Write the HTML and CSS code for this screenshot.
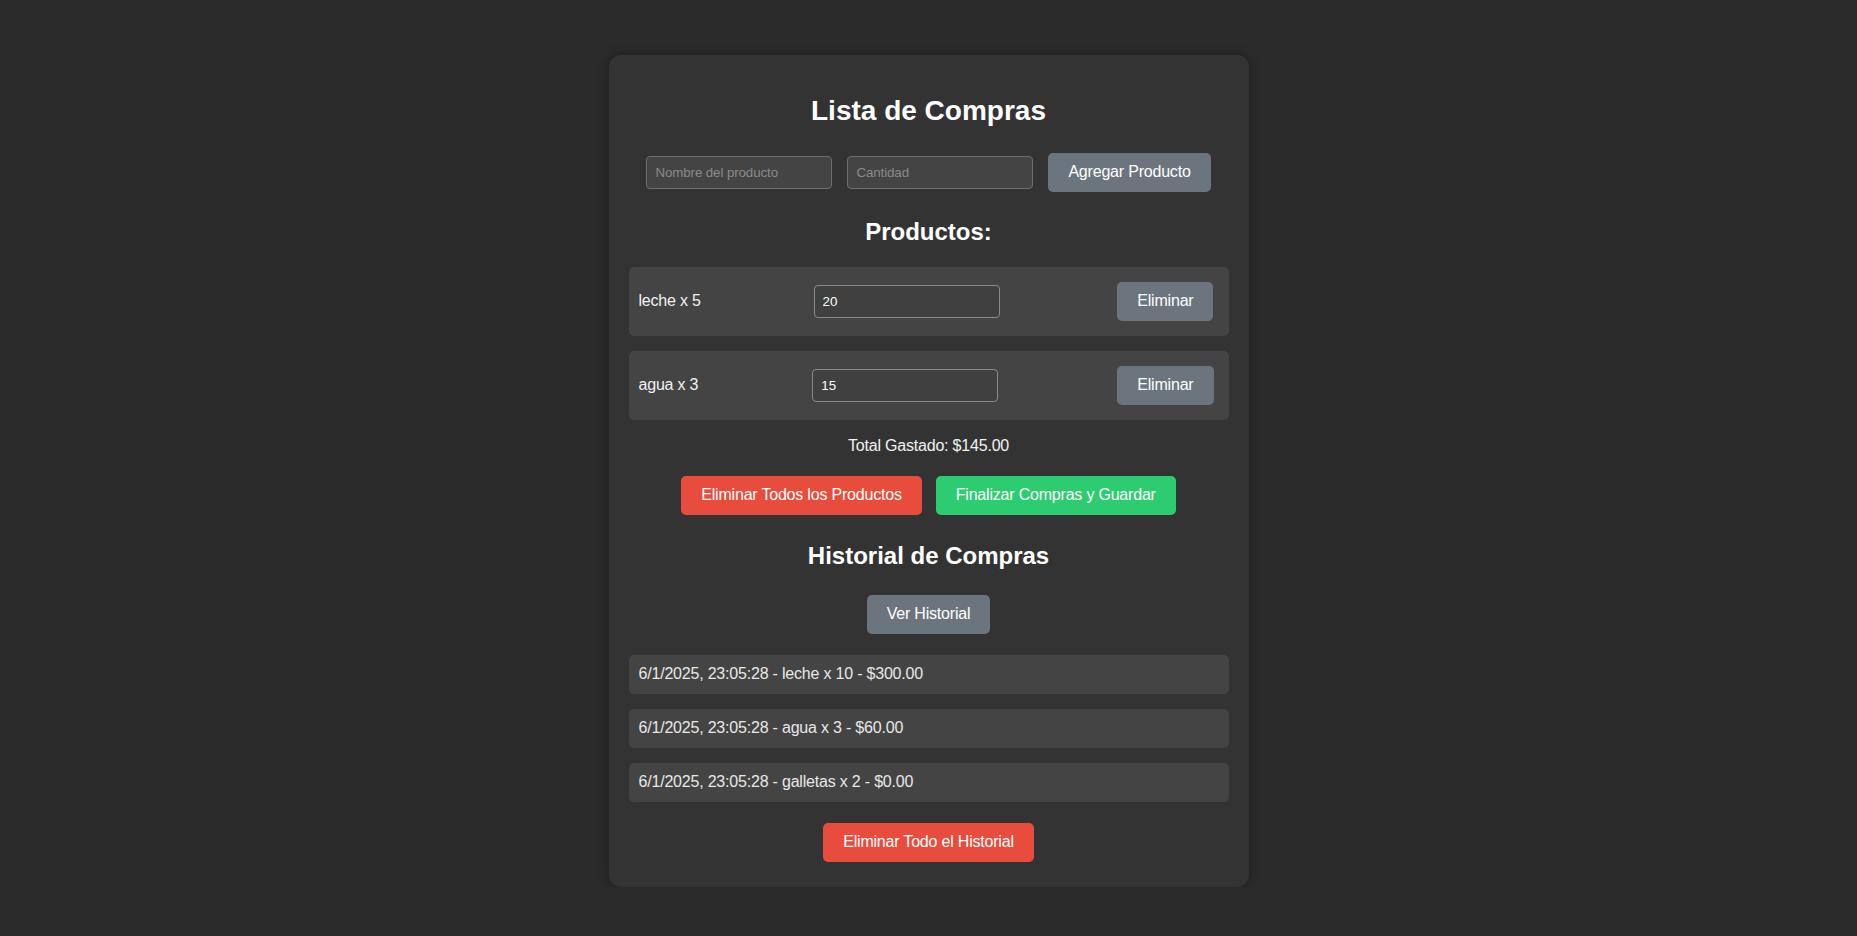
FILE: index.html
```html
<!DOCTYPE html>
<html lang="es">
<head>
<meta charset="utf-8">
<title>Lista de Compras</title>
<link rel="stylesheet" href="styles.css">
</head>
<body>
<div class="card">
  <h1 class="title">Lista de Compras</h1>
  <div class="add-row">
    <input class="field" type="text" placeholder="Nombre del producto">
    <input class="field" type="text" placeholder="Cantidad">
    <button class="btn btn-grey">Agregar Producto</button>
  </div>

  <h2 class="subtitle sub-products">Productos:</h2>
  <ul class="product-list">
    <li class="product">
      <span class="product-name">leche x 5</span>
      <input class="price" type="text" value="20">
      <button class="btn btn-grey">Eliminar</button>
    </li>
    <li class="product">
      <span class="product-name">agua x 3</span>
      <input class="price" type="text" value="15">
      <button class="btn btn-grey">Eliminar</button>
    </li>
  </ul>

  <p class="total">Total Gastado: $145.00</p>

  <div class="action-row">
    <button class="btn btn-red">Eliminar Todos los Productos</button>
    <button class="btn btn-green">Finalizar Compras y Guardar</button>
  </div>

  <h2 class="subtitle sub-history">Historial de Compras</h2>
  <div class="center-row view-row">
    <button class="btn btn-grey">Ver Historial</button>
  </div>

  <ul class="history-list">
    <li class="history-item">6/1/2025, 23:05:28 - leche x 10 - $300.00</li>
    <li class="history-item">6/1/2025, 23:05:28 - agua x 3 - $60.00</li>
    <li class="history-item">6/1/2025, 23:05:28 - galletas x 2 - $0.00</li>
  </ul>

  <div class="center-row clear-row">
    <button class="btn btn-red">Eliminar Todo el Historial</button>
  </div>
</div>
</body>
</html>
```

FILE: styles.css
```css
html, body {
  margin: 0;
  padding: 0;
}

body {
  background: #2b2b2b;
  font-family: "Liberation Sans", Arial, sans-serif;
  color: #f2f2f2;
  font-size: 16px;
  letter-spacing: -0.2px;
}

.card {
  box-sizing: border-box;
  width: 640px;
  margin: 55px auto 0;
  padding: 20px;
  background: #333333;
  border-radius: 12px;
  box-shadow: 0 0 12px rgba(0, 0, 0, 0.35);
}

.title {
  margin: 20px 0 0;
  font-size: 28px;
  line-height: 32px;
  font-weight: bold;
  text-align: center;
  color: #ffffff;
  letter-spacing: 0;
}

.add-row {
  display: flex;
  justify-content: center;
  align-items: center;
  gap: 15px;
  margin-top: 26px;
}

.field {
  box-sizing: border-box;
  width: 186px;
  height: 33px;
  padding: 8px;
  font-family: "Liberation Sans", Arial, sans-serif;
  font-size: 13.33px;
  letter-spacing: -0.1px;
  color: #f2f2f2;
  background: #444444;
  border: 1px solid #6e6e6e;
  border-radius: 4px;
  outline: none;
}

.field::placeholder {
  color: #8a8a8a;
}

.btn {
  font-family: "Liberation Sans", Arial, sans-serif;
  font-size: 16px;
  line-height: 18.7px;
  letter-spacing: -0.2px;
  padding: 10px 20px;
  border: none;
  border-radius: 5px;
  color: #ffffff;
  cursor: pointer;
}

.btn-grey {
  background: #6c757d;
}

.btn-red {
  background: #e74c3c;
}

.btn-green {
  background: #2ecc71;
}

.subtitle {
  margin: 0;
  font-size: 24px;
  line-height: 27.6px;
  font-weight: bold;
  text-align: center;
  color: #ffffff;
  letter-spacing: 0;
}

.sub-products {
  margin-top: 26.4px;
}

.product-list,
.history-list {
  list-style: none;
  margin: 0;
  padding: 0;
}

.product-list {
  margin-top: 21.3px;
  display: flex;
  flex-direction: column;
  gap: 15.3px;
}

.product {
  display: flex;
  justify-content: space-between;
  align-items: center;
  padding: 10px;
  background: #444444;
  border-radius: 5px;
}

.product .btn {
  margin: 5px;
}

.product-name {
  color: #f2f2f2;
}

.price {
  box-sizing: border-box;
  width: 186px;
  height: 33.5px;
  margin: 5px;
  padding: 8px;
  font-family: "Liberation Sans", Arial, sans-serif;
  font-size: 13.33px;
  color: #ffffff;
  background: #404040;
  border: 1px solid #8a8a8a;
  border-radius: 4px;
  outline: none;
}

.total {
  margin: 17.8px 0 0;
  line-height: 18.4px;
  text-align: center;
  color: #f2f2f2;
}

.action-row {
  display: flex;
  justify-content: center;
  gap: 14px;
  margin-top: 20.1px;
}

.sub-history {
  margin-top: 27.7px;
}

.center-row {
  display: flex;
  justify-content: center;
}

.view-row {
  margin-top: 25px;
}

.history-list {
  margin-top: 21.3px;
  display: flex;
  flex-direction: column;
  gap: 15.3px;
}

.history-item {
  padding: 10px;
  line-height: 18.7px;
  background: #444444;
  border-radius: 5px;
  color: #e8e8e8;
}

.clear-row {
  margin-top: 21.3px;
  padding-bottom: 5px;
}
```
